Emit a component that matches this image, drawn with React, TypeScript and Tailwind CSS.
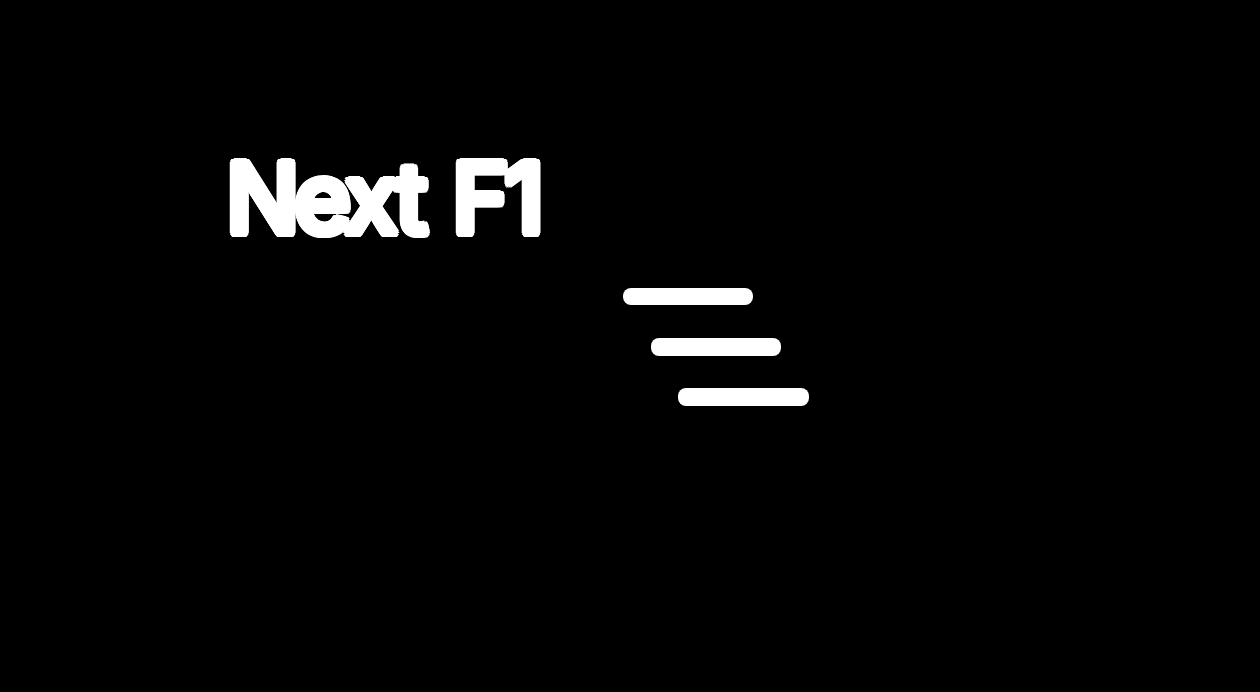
export default function App() {
  return (
    <div className="h-[692px] w-[1260px] overflow-hidden bg-black">
      <div className="pl-[226px] pt-[138px]">
        {/* the wordmark has rounded corners, a ring of shadows gives that where a text stroke stays sharp */}
        <h1 className="h-[120px] whitespace-nowrap font-['Inter',sans-serif] text-[97px] font-medium leading-[120px] tracking-[-5px] [word-spacing:8px] text-white [text-shadow:4px_0_0_#fff,3.5px_2px_0_#fff,2.8px_2.8px_0_#fff,2px_3.5px_0_#fff,0_4px_0_#fff,-2px_3.5px_0_#fff,-2.8px_2.8px_0_#fff,-3.5px_2px_0_#fff,-4px_0_0_#fff,-3.5px_-2px_0_#fff,-2.8px_-2.8px_0_#fff,-2px_-3.5px_0_#fff,0_-4px_0_#fff,2px_-3.5px_0_#fff,2.8px_-2.8px_0_#fff,3.5px_-2px_0_#fff]">
          Next F1
        </h1>
      </div>
      <div className="ml-[622.7px] mt-[29.7px] flex flex-col">
        <div className="h-[17.5px] w-[130.3px] rounded-[8px] bg-white" />
        <div className="ml-[28.3px] mt-[33px] h-[17.5px] w-[130.3px] rounded-[8px] bg-white" />
        <div className="ml-[55.6px] mt-[32.5px] h-[17.5px] w-[130.3px] rounded-[8px] bg-white" />
      </div>
    </div>
  );
}
